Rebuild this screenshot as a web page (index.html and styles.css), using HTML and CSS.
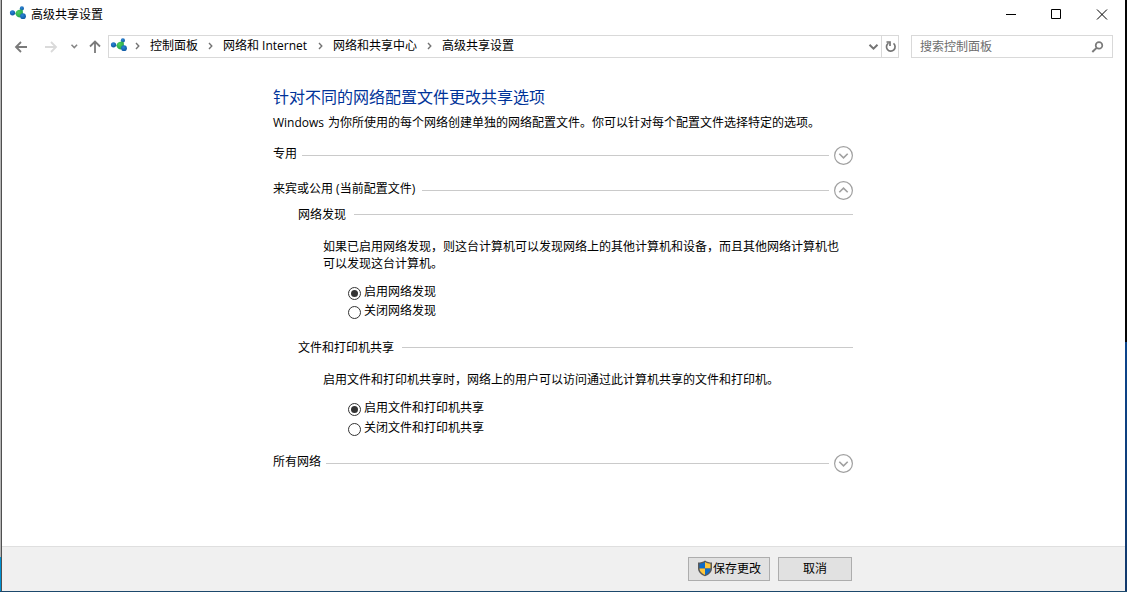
FILE: index.html
```html
<!DOCTYPE html>
<html lang="zh-CN">
<head>
<meta charset="utf-8">
<title>高级共享设置</title>
<link rel="stylesheet" href="styles.css">
</head>
<body>
<svg width="0" height="0" class="defs">
  <defs>
    <radialGradient id="green" cx=".4" cy=".35" r=".7"><stop offset="0" stop-color="#4fd05c"/><stop offset="1" stop-color="#1f9f4b"/></radialGradient>
    <radialGradient id="blue" cx=".4" cy=".35" r=".7"><stop offset="0" stop-color="#2b86d6"/><stop offset="1" stop-color="#0b55a0"/></radialGradient>
    <symbol id="network" viewBox="0 0 18 16">
      <path d="M3.5 7.5L8 7.5" fill="none" stroke="#b9d5ea" stroke-width="1"/>
      <circle cx="3.500" cy="6.800" r="2.600" fill="url(#blue)"/>
      <circle cx="12.900" cy="2.400" r="2.100" fill="url(#blue)"/>
      <path d="M6.500 7.300C6.700 5.300 9 3.600 12.300 3.600L13.800 4.500L14 10L10.500 11.500C8 11 6.500 9.500 6.500 7.300Z" fill="url(#green)"/>
      <circle cx="14" cy="10.200" r="2.900" fill="url(#blue)"/>
    </symbol>
    <symbol id="down" viewBox="0 0 19 19">
      <circle cx="9.500" cy="9.500" r="8.900" fill="#fff" stroke="#a0a0a0" stroke-width="1.200"/>
      <path d="M5.300 7.700L9.500 11.900L13.700 7.700" fill="none" stroke="#a0a0a0" stroke-width="1.600"/>
    </symbol>
  </defs>
</svg>
<div class="desktop">
  <div class="edge-left"></div>
  <div class="window">
    <header class="titlebar">
      <svg class="app-icon" width="18" height="16"><use href="#network"/></svg>
      <h1 class="title">高级共享设置</h1>
      <svg class="controls" width="116" height="28" fill="none" stroke="#000">
        <path d="M4 14.500H14M49.500 9.500H58.500V18.500H49.500ZM95 9.500L105 19.500M105 9.500L95 19.500"/>
      </svg>
    </header>
    <nav class="toolbar">
      <svg class="arrows" width="106" height="23" fill="none" stroke-width="1.800">
        <path d="M25 12H14M19 7L14 12L19 17" stroke="#7a7a7a"/>
        <path d="M43 12H54M49 7L54 12L49 17" stroke="#dadada"/>
        <path d="M69.500 9.800L72.300 12.600L75.100 9.800" stroke="#858585" stroke-width="1.500"/>
        <path d="M93 18V6.500M88 11.500L93 6.500L98 11.500" stroke="#7a7a7a"/>
      </svg>
      <div class="address">
        <svg class="path-icon" width="18" height="16"><use href="#network"/></svg>
        <svg class="sep" width="5" height="8"><path d="M1 1L3.800 4L1 7"/></svg><span class="crumb c1">控制面板</span>
        <svg class="sep" width="5" height="8"><path d="M1 1L3.800 4L1 7"/></svg><span class="crumb c2">网络和 Internet</span>
        <svg class="sep" width="5" height="8"><path d="M1 1L3.800 4L1 7"/></svg><span class="crumb c3">网络和共享中心</span>
        <svg class="sep" width="5" height="8"><path d="M1 1L3.800 4L1 7"/></svg><span class="crumb">高级共享设置</span>
        <svg class="drop" width="12" height="21" fill="none" stroke="#747474" stroke-width="2"><path d="M1.500 8.700L5.500 12.700L9.500 8.700"/></svg>
        <div class="refresh"><svg width="16" height="21" fill="none" stroke="#747474" stroke-width="1.700"><path d="M11.500 7.400A4.300 4.300 0 1 1 6.500 7.100M4.500 6H8V10"/></svg></div>
      </div>
      <div class="search">
        <span>搜索控制面板</span>
        <svg width="14" height="14" fill="none" stroke="#7a7a7a"><circle cx="8" cy="5.400" r="3.300" stroke-width="1.700"/><path d="M5.600 7.900L1.300 12" stroke-width="2"/></svg>
      </div>
    </nav>
    <main class="content">
      <h2 class="heading">针对不同的网络配置文件更改共享选项</h2>
      <p class="intro"><span class="product">Windows</span>为你所使用的每个网络创建单独的网络配置文件。你可以针对每个配置文件选择特定的选项。</p>
      <section class="profile private"><span class="label">专用</span><i class="rule"></i><svg class="toggle" width="19" height="19"><use href="#down"/></svg></section>
      <section class="profile public"><span class="label">来宾或公用 (当前配置文件)</span><i class="rule"></i><svg class="toggle flipped" width="19" height="19"><use href="#down"/></svg></section>
      <section class="group discovery">
        <div class="subhead"><span>网络发现</span><i class="rule"></i></div>
        <p class="desc">如果已启用网络发现，则这台计算机可以发现网络上的其他计算机和设备，而且其他网络计算机也可以发现这台计算机。</p>
        <label class="option"><span class="radio on"></span><span class="option-text">启用网络发现</span></label>
        <label class="option"><span class="radio"></span><span class="option-text">关闭网络发现</span></label>
      </section>
      <section class="group sharing">
        <div class="subhead"><span>文件和打印机共享</span><i class="rule"></i></div>
        <p class="desc">启用文件和打印机共享时，网络上的用户可以访问通过此计算机共享的文件和打印机。</p>
        <label class="option"><span class="radio on"></span><span class="option-text">启用文件和打印机共享</span></label>
        <label class="option"><span class="radio"></span><span class="option-text">关闭文件和打印机共享</span></label>
      </section>
      <section class="profile all"><span class="label">所有网络</span><i class="rule"></i><svg class="toggle" width="19" height="19"><use href="#down"/></svg></section>
    </main>
    <footer class="footer">
      <button class="button save"><svg width="16" height="17" viewBox="0 0 16 17"><path d="M8 .5C6 2 3.500 2.600 1 2.600V8.500C1 12.500 5 15.300 8 16.300C11 15.300 15 12.500 15 8.500V2.600C12.500 2.600 10 2 8 .5Z" fill="#595959"/><path d="M8 2.100C6.500 3.200 4.500 3.800 2.500 3.800V8.500H8Z" fill="#0d6bc8"/><path d="M8 2.100C9.500 3.200 11.500 3.800 13.500 3.800V8.500H8Z" fill="#ffc63a"/><path d="M2.500 8.500C2.700 11.800 5.500 14 8 14.900V8.500Z" fill="#ffc63a"/><path d="M13.500 8.500C13.300 11.800 10.500 14 8 14.900V8.500Z" fill="#0d6bc8"/></svg><span>保存更改</span></button>
      <button class="button cancel">取消</button>
    </footer>
  </div>
  <div class="edge-right"></div>
  <div class="edge-bottom"></div>
</div>
</body>
</html>
```

FILE: styles.css
```css
* { box-sizing: border-box; }
body, h1, h2, p { margin: 0; font-weight: 400; }
body {
  font: 12px/16px "Open Sans", "Noto Sans CJK SC", sans-serif;
  color: #000;
  overflow: hidden;
  text-spacing-trim: space-all;
}
svg { display: block; flex: none; }
.defs { position: absolute; }
.desktop {
  display: grid;
  grid-template: 591px 1px / 2px 1fr 2px;
  width: 1127px;
  height: 592px;
}
.edge-left {
  border-right: 1px solid #4f4f4f;
  background: linear-gradient(#b4b4b4 557px, #0091d2 557px);
}
.edge-right { background: linear-gradient(#050505 342px, #0b448c 342px, #12396b); }
.edge-bottom { grid-column: 1 / -1; background: #1c486c; }
.window { display: flex; flex-direction: column; background: #fff; }

.titlebar { display: flex; height: 28px; }
.app-icon { margin: 6px 0 0 7px; }
.title { margin: 7px auto 0 4px; font-size: 12px; line-height: 16px; }
.controls { margin-right: 7px; }

.toolbar { display: flex; height: 30px; padding-top: 7px; }
.address {
  display: flex;
  align-items: center;
  width: 791px;
  height: 23px;
  border: 1px solid #d9d9d9;
  white-space: nowrap;
}
.path-icon { margin: 0 7px 2px 1px; }
.sep { fill: none; stroke: #747474; stroke-width: 1.4; margin: 0 10px 1px 0; }
.crumb { margin: 0 10px 1px 0; }
.c1 { width: 48px; }
.c2 { width: 85px; }
.c3 { width: 84px; }
.address .crumb:last-of-type { margin-right: auto; }
.drop { margin-right: 1px; }
.refresh { width: 17px; height: 21px; border-left: 1px solid #d9d9d9; }
.search {
  display: flex;
  align-items: center;
  justify-content: space-between;
  width: 202px;
  height: 23px;
  margin-left: 12px;
  padding: 0 7px 0 8px;
  border: 1px solid #d9d9d9;
  color: #6d6d6d;
}

.content { width: 580px; height: 488px; margin-left: 271px; padding-top: 29px; }
.heading { font-size: 16px; line-height: 20px; color: #039; }
.intro { margin-top: 8px; white-space: nowrap; }
.product { margin-right: 4px; }
.rule { flex: 1; height: 1px; background: #cacaca; }
.profile { display: flex; align-items: center; height: 19px; }
.label { margin: 0 5px 3px 0; }
.profile .rule { margin-right: 5px; }
.flipped { transform: rotate(180deg); }
.private { margin-top: 15px; }
.public { margin-top: 16px; }
.public .label { width: 144px; white-space: nowrap; }
.group { margin: 6px 0 0 25px; }
.subhead { display: flex; align-items: center; height: 17px; }
.subhead .rule { margin-left: 8px; }
.desc { width: 518px; margin: 15px 0 12px 25px; line-height: 17px; }
.option { display: flex; align-items: center; height: 19.500px; margin-left: 50px; }
.discovery .option { height: 19px; }
.radio {
  display: grid;
  place-items: center;
  width: 13px;
  height: 13px;
  border: 1px solid #333;
  border-radius: 50%;
}
.on::before { content: ""; width: 7px; height: 7px; border-radius: 50%; background: #333; }
.option-text { margin: 0 0 3px 3px; }
.group.sharing { margin-top: 17px; }
.all { margin-top: 15px; }

.footer {
  display: flex;
  gap: 8px;
  height: 45px;
  padding: 10px 0 0 686px;
  border-top: 1px solid #dfdfdf;
  background: #f0f0f0;
}
.button {
  display: flex;
  align-items: center;
  justify-content: center;
  height: 24px;
  padding: 0;
  border: 1px solid #adadad;
  background: #e1e1e1;
  font: inherit;
  color: #000;
}
.save { width: 82px; padding-bottom: 1px; }
.cancel { width: 74px; padding-bottom: 1px; }
```
